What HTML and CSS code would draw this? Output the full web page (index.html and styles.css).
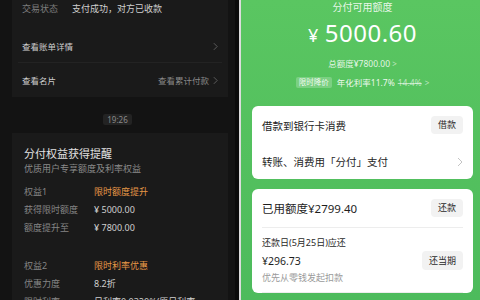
FILE: index.html
```html
<!DOCTYPE html>
<html>
<head>
<meta charset="utf-8">
<link rel="stylesheet" href="styles.css">
</head>
<body>
<div class="screen">

    <div class="chat">
        <div class="card bill">
            <div class="kv first"><span class="k">交易状态</span><span class="v">支付成功，对方已收款</span></div>
            <div class="link split"><span>查看账单详情</span><svg class="chev" viewBox="0 0 6 10"><polyline points="1,1 5,5 1,9"/></svg></div>
            <div class="link"><span>查看名片</span><span class="more">查看累计付款<svg class="chev" viewBox="0 0 6 10"><polyline points="1,1 5,5 1,9"/></svg></span></div>
        </div>

        <div class="time"><span>19:26</span></div>

        <div class="card notice">
            <div class="title">分付权益获得提醒</div>
            <div class="sub">优质用户专享额度及利率权益</div>
            <div class="rows">
                <div class="r"><span class="k">权益1</span><span class="v hi">限时额度提升</span></div>
                <div class="r"><span class="k">获得限时额度</span><span class="v">¥ 5000.00</span></div>
                <div class="r"><span class="k">额度提升至</span><span class="v">¥ 7800.00</span></div>
            </div>
            <div class="rows second">
                <div class="r"><span class="k">权益2</span><span class="v hi">限时利率优惠</span></div>
                <div class="r"><span class="k">优惠力度</span><span class="v">8.2折</span></div>
                <div class="r"><span class="k">限时利率</span><span class="v">日利率0.0320%(原日利率</span></div>
            </div>
        </div>
    </div>

    <div class="edge"></div>
    <div class="gap"></div>

    <div class="wallet">
        <div class="head">
            <div class="label">分付可用额度</div>
            <div class="amount"><span class="yen">¥</span>5000.60</div>
            <div class="total">总额度¥7800.00 <span class="arr">&gt;</span></div>
            <div class="rate"><span class="tag">限时降价</span>年化利率11.7% <s>14.4%</s> <span class="arr">&gt;</span></div>
        </div>

        <div class="panel">
            <div class="line tall"><span>借款到银行卡消费</span><span class="btn">借款</span></div>
            <div class="line"><span>转账、消费用「分付」支付</span><svg class="chev light" viewBox="0 0 6 10"><polyline points="1,1 5,5 1,9"/></svg></div>
        </div>

        <div class="panel used">
            <div class="line tall ruled"><span class="big">已用额度¥2799.40</span><span class="btn">还款</span></div>
            <div class="due">
                <div class="small">还款日(5月25日)应还</div>
                <div class="pay"><span class="money">¥296.73</span><span class="btn">还当期</span></div>
                <div class="hint">优先从零钱发起扣款</div>
            </div>
        </div>
    </div>

</div>
</body>
</html>
```

FILE: styles.css
```css
html, body { margin: 0; padding: 0; }
body {
    width: 480px;
    height: 300px;
    overflow: hidden;
    font-family: "Noto Sans", "Noto Sans CJK SC", sans-serif;
    background: #121212;
}
.screen {
    display: grid;
    grid-template-columns: 235px 4px 2px 1fr;
    height: 300px;
}

/* left: chat */
.chat { background: #131313; overflow: hidden; }
.card { background: #1a1a1a; margin: 0 7px 0 12px; }
.bill { padding: 0 6px; }
.kv { display: flex; height: 17px; align-items: center; font-size: 9px; padding-left: 4px; }
.kv .k { color: #7d7d7d; width: 50px; }
.kv .v { color: #d0d0d0; }
.link {
    display: flex; justify-content: space-between; align-items: center;
    height: 34px; padding: 0 4px; font-size: 8.5px; color: #cfcfcf;
}
.link.split { margin-top: 13px; height: 32px; border-bottom: 1px solid #232323; }
.link .more { color: #8a8a8a; display: flex; align-items: center; gap: 4px; }
.chev { width: 5px; height: 9px; fill: none; stroke: #6a6a6a; stroke-width: 1; }
.chev.light { stroke: #c4c4c4; width: 6px; height: 10px; }

.time { display: flex; justify-content: center; margin-top: 17px; }
.time span {
    background: #232323; color: #8a8a8a; font-size: 8px; line-height: 11px;
    padding: 0 4px; border-radius: 2px;
}

.notice { margin-top: 8px; padding: 13px 12px 0; }
.notice .title { font-size: 11px; line-height: 16px; color: #e2e2e2; }
.notice .sub { font-size: 9px; line-height: 14px; color: #8a8a8a; }
.rows { margin-top: 7px; }
.rows.second { margin-top: 20px; }
.r { display: flex; font-size: 9px; line-height: 18px; }
.r .k { width: 70px; color: #858585; }
.r .v { color: #cfcfcf; }
.r .v.hi { color: #e79847; }

.edge { background: #0b0b0b; }
.gap { background: #dcdcdc; }

/* right: wallet */
.wallet {
    background: linear-gradient(#5ac661, #4dbb5c);
    padding: 0 7px 0 11px;
    overflow: hidden;
}
.head { display: flex; flex-direction: column; align-items: center; color: #fff; }
.label { font-size: 10px; line-height: 14px; color: rgba(255,255,255,0.88); }
.amount { margin-top: 4px; font-size: 24px; line-height: 30px; letter-spacing: 0.5px; }
.amount .yen { font-size: 18px; margin-right: 6px; }
.total { margin-top: 7px; font-size: 8.5px; line-height: 14px; color: rgba(255,255,255,0.85); }
.arr { color: rgba(255,255,255,0.6); font-size: 8px; }
.rate { margin-top: 4px; font-size: 8.5px; line-height: 15px; color: rgba(255,255,255,0.9); display: flex; align-items: center; }
.rate .tag {
    background: rgba(255,255,255,0.22); font-size: 7.5px; line-height: 11px;
    padding: 0 3px; border-radius: 2px; margin-right: 5px;
}
.rate s { color: rgba(255,255,255,0.6); margin: 0 3px; }

.panel { background: #fff; border-radius: 6px; margin-top: 16px; padding: 0 10px; }
.panel.used { margin-top: 10px; }
.line {
    display: flex; justify-content: space-between; align-items: center;
    height: 35px; font-size: 10.5px; color: #1e1e1e;
}
.line.tall { height: 38px; }
.line.ruled { border-bottom: 1px solid #ededed; }
.big { font-size: 11.5px; }
.btn {
    background: #f2f2f2; color: #2a2a2a; font-size: 9px; line-height: 18px;
    padding: 0 7px; border-radius: 4px;
}
.due { padding: 8px 0 6px; border-bottom: 1px solid #ededed; }
.small { font-size: 9px; line-height: 14px; color: #2a2a2a; }
.pay { display: flex; justify-content: space-between; align-items: center; margin-top: 1px; height: 19px; }
.money { font-size: 10.5px; color: #1e1e1e; }
.pay .btn { line-height: 19px; }
.hint { font-size: 9px; line-height: 16px; color: #9a9a9a; }
```
